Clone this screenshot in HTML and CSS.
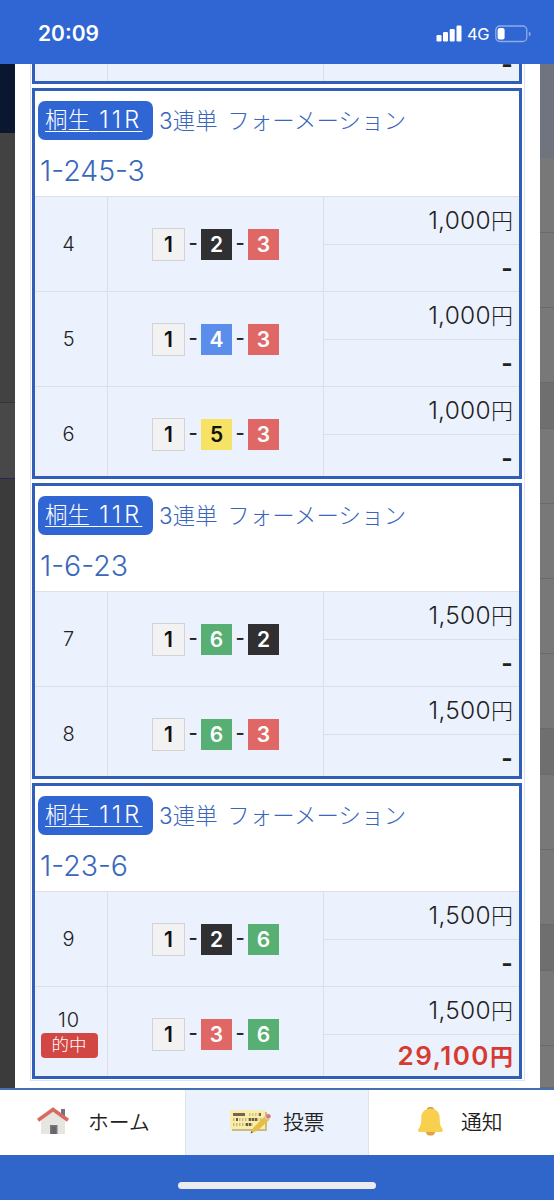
FILE: index.html
```html
<!DOCTYPE html>
<html lang="ja">
<head>
    <meta charset="UTF-8">
    <meta name="viewport" content="width=device-width, initial-scale=1.0">
    <title>投票履歴</title>
    <link rel="stylesheet" href="styles.css">
</head>
<body>
    <header class="status-bar">
        <span class="clock">20:09</span>
        <div class="status-icons">
            <svg class="signal" width="26" height="17" viewBox="0 0 26 17" fill="#fff">
                <rect x="0.5" y="10" width="5" height="6.5" rx="1.2"/>
                <rect x="7" y="7" width="5" height="9.5" rx="1.2"/>
                <rect x="13.7" y="4" width="5" height="12.5" rx="1.2"/>
                <rect x="20.5" y="0.5" width="5" height="16" rx="1.2"/>
            </svg>
            <span class="network">4G</span>
            <svg class="battery" width="36" height="18" viewBox="0 0 36 18">
                <rect x="0.8" y="1" width="31" height="15.5" rx="4" fill="none" stroke="#8eabe5" stroke-width="1.3"/>
                <rect x="2.6" y="3" width="7" height="11.6" rx="2" fill="#fff"/>
                <path d="M33.8 6.5a2.6 2.6 0 0 1 0 5z" fill="#8eabe5"/>
            </svg>
        </div>
    </header>

    <div class="main">
        <div class="backdrop backdrop-left">
            <div class="navy"></div>
            <div class="mid"></div>
            <div class="light"></div>
            <div class="rest"></div>
        </div>

        <div class="sheet">
            <div class="bet-list">
                <section class="bet bet-prev">
                    <div class="row">
                        <div class="no"></div>
                        <div class="combo"></div>
                        <div class="money"><div class="payout">-</div></div>
                    </div>
                </section>

                <section class="bet">
                    <div class="bet-head">
                        <div class="race-line"><a class="race">桐生 <b>11R</b></a><span class="type"><b>3</b>連単 フォーメーション</span></div>
                        <div class="numbers">1-245-3</div>
                    </div>
                    <div class="row">
                        <div class="no">4</div>
                        <div class="combo"><span class="boat b1">1</span><i>-</i><span class="boat b2">2</span><i>-</i><span class="boat b3">3</span></div>
                        <div class="money"><div class="amount">1,000<span>円</span></div><div class="payout">-</div></div>
                    </div>
                    <div class="row">
                        <div class="no">5</div>
                        <div class="combo"><span class="boat b1">1</span><i>-</i><span class="boat b4">4</span><i>-</i><span class="boat b3">3</span></div>
                        <div class="money"><div class="amount">1,000<span>円</span></div><div class="payout">-</div></div>
                    </div>
                    <div class="row">
                        <div class="no">6</div>
                        <div class="combo"><span class="boat b1">1</span><i>-</i><span class="boat b5">5</span><i>-</i><span class="boat b3">3</span></div>
                        <div class="money"><div class="amount">1,000<span>円</span></div><div class="payout">-</div></div>
                    </div>
                </section>

                <section class="bet">
                    <div class="bet-head">
                        <div class="race-line"><a class="race">桐生 <b>11R</b></a><span class="type"><b>3</b>連単 フォーメーション</span></div>
                        <div class="numbers">1-6-23</div>
                    </div>
                    <div class="row">
                        <div class="no">7</div>
                        <div class="combo"><span class="boat b1">1</span><i>-</i><span class="boat b6">6</span><i>-</i><span class="boat b2">2</span></div>
                        <div class="money"><div class="amount">1,500<span>円</span></div><div class="payout">-</div></div>
                    </div>
                    <div class="row">
                        <div class="no">8</div>
                        <div class="combo"><span class="boat b1">1</span><i>-</i><span class="boat b6">6</span><i>-</i><span class="boat b3">3</span></div>
                        <div class="money"><div class="amount">1,500<span>円</span></div><div class="payout">-</div></div>
                    </div>
                </section>

                <section class="bet">
                    <div class="bet-head">
                        <div class="race-line"><a class="race">桐生 <b>11R</b></a><span class="type"><b>3</b>連単 フォーメーション</span></div>
                        <div class="numbers">1-23-6</div>
                    </div>
                    <div class="row">
                        <div class="no">9</div>
                        <div class="combo"><span class="boat b1">1</span><i>-</i><span class="boat b2">2</span><i>-</i><span class="boat b6">6</span></div>
                        <div class="money"><div class="amount">1,500<span>円</span></div><div class="payout">-</div></div>
                    </div>
                    <div class="row">
                        <div class="no no-hit">10<span class="hit">的中</span></div>
                        <div class="combo"><span class="boat b1">1</span><i>-</i><span class="boat b3">3</span><i>-</i><span class="boat b6">6</span></div>
                        <div class="money"><div class="amount">1,500<span>円</span></div><div class="payout win">29,100<span>円</span></div></div>
                    </div>
                </section>
            </div>
        </div>

        <div class="backdrop backdrop-right">
            <div class="top"></div>
            <div></div>
            <div></div>
            <div></div>
            <div class="dark"></div>
            <div></div>
            <div></div>
            <div></div>
            <div></div>
            <div class="dark"></div>
            <div></div>
            <div></div>
            <div class="dark"></div>
            <div></div>
            <div class="end"></div>
        </div>
    </div>

    <nav class="tabs">
        <a class="tab tab-home">
            <svg width="32" height="28" viewBox="0 0 32 28">
                <path d="M24 2h4v10h-4z" fill="#767282"/>
                <path d="M4 13 16 4l12 9v14H4z" fill="#e7e5e0"/>
                <path d="M1 13.2 16 2.5l15 10.7" fill="none" stroke="#d96a60" stroke-width="3.6"/>
                <path d="M13 18h7.5v9H13z" fill="#77767a"/>
                <path d="M14.5 19.5h4.5v7.5h-4.5z" fill="#66656a"/>
            </svg>
            <span>ホーム</span>
        </a>
        <a class="tab tab-vote active">
            <svg width="43" height="28" viewBox="0 0 43 28">
                <path d="M3 5h35v19H3z" fill="#c9bd82"/>
                <path d="M1 3h35v19H1z" fill="#faedab"/>
                <path d="M4 6h12v3H4z" fill="#6e6755"/>
                <path d="M20 7.5h12" stroke="#d0c48d" stroke-width="3" stroke-dasharray="1.5 1.5"/>
                <path d="M30 6h2v3h-2z" fill="#6e6755"/>
                <path d="M4 12.5h29M4 17.5h20" stroke="#c6b981" stroke-width="3" stroke-dasharray="1.5 1.5"/>
                <path d="M7 11h2v3H7zM20 11h2v3h-2zM23 11h2v3h-2zM26 11h2v3h-2zM17 16h2v3h-2zM20 16h2v3h-2z" fill="#665d43"/>
                <path d="m22 26 2.5-5.5 12-11.7 4 4L28 24z" fill="#e8bd46"/>
                <path d="m36 9.2 3 3" stroke="#d3ced8" stroke-width="2.2"/>
                <circle cx="39.4" cy="9.2" r="2.3" fill="#d97974"/>
                <path d="m21.5 26.5 1-2.5 1.5 1.5z" fill="#5d5546"/>
            </svg>
            <span>投票</span>
        </a>
        <a class="tab tab-notice">
            <svg width="27" height="30" viewBox="0 0 27 30">
                <ellipse cx="13.5" cy="4" rx="3.7" ry="3" fill="#c99846"/>
                <ellipse cx="13.5" cy="25.6" rx="4.8" ry="4" fill="#dba34a"/>
                <path d="M13.5 2.5c5.5 0 9.2 3.8 9.2 9.2 0 6 .8 8.8 2.8 11.2 1 1.4.3 3-1.5 3H3c-1.8 0-2.5-1.6-1.5-3 2-2.4 2.8-5.2 2.8-11.2 0-5.4 3.7-9.2 9.2-9.2z" fill="#f8d04d"/>
            </svg>
            <span>通知</span>
        </a>
    </nav>
    <footer class="home-bar"><div class="indicator"></div></footer>
</body>
</html>
```
FILE: styles.css
```css
* {
    box-sizing: border-box;
}

body {
    width: 554px;
    height: 1200px;
    margin: 0;
    overflow: hidden;
    background-color: #fff;
    color: #222;
    font-family: Inter, "Noto Sans CJK JP", sans-serif;
    font-weight: 300;
}

b, i {
    font-weight: inherit;
    font-style: normal;
}

/* Status bar */
.status-bar {
    height: 64px;
    padding: 0 23px 0 38px;
    display: flex;
    justify-content: space-between;
    align-items: center;
    background-color: #3066d3;
    color: #fff;
}

.clock {
    font-size: 21px;
    font-weight: 600;
    line-height: 24px;
    margin-top: 3px;
}

.status-icons {
    display: flex;
    align-items: center;
    margin-top: 3px;
}

.network {
    margin: 1px 6px 0 5px;
    width: 22px;
    font-size: 16.5px;
    font-weight: 400;
    line-height: 20px;
    letter-spacing: -0.4px;
}

/* Main */
.main {
    height: 1024px;
    display: flex;
    overflow: hidden;
}

.sheet {
    width: 525px;
    padding: 0 15px;
    background-color: #fff;
}

.bet-list {
    height: 1017px;
    padding: 0 2px 0 1px;
    border: 1px solid #dce4f3;
    border-top: none;
}

.bet {
    margin-bottom: 4px;
    border: 3px solid #315fb8;
    background-color: #fff;
}

.bet-prev {
    height: 20px;
    border-top: none;
}

.bet-head {
    height: 105px;
    padding: 10px 3px 0;
    color: #3a67bb;
}

.race-line {
    display: flex;
    align-items: center;
}

.race {
    width: 115px;
    height: 39px;
    padding-left: 7px;
    border-radius: 7px;
    background-color: #3066d3;
    color: #fff;
    font-size: 22.5px;
    line-height: 38px;
    white-space: nowrap;
    word-spacing: 3px;
    text-decoration: underline;
    text-decoration-thickness: 1px;
    text-underline-offset: 3px;
}

.race b {
    font-size: 23.5px;
    letter-spacing: 3.2px;
    margin-right: -3px;
}

.type {
    margin: -1px 0 0 6px;
    font-size: 22.4px;
    line-height: 37px;
    white-space: nowrap;
    letter-spacing: 0.15px;
    word-spacing: 3px;
}

.numbers {
    margin-top: 13px;
    padding-left: 2px;
    font-size: 28.5px;
    line-height: 36px;
}

/* Bet rows */
.row {
    height: 95px;
    display: grid;
    grid-template-columns: 72px 216px 196px;
    background-color: #ebf1fd;
    border-top: 1px solid #dedfe5;
}

.row:last-child {
    height: 90px;
}

.bet-prev .row {
    height: 17px;
    border-top: none;
}

.row, .bet-prev {
    overflow: hidden;
}

.no {
    height: 94px;
    display: flex;
    flex-direction: column;
    align-items: center;
    justify-content: center;
    padding-right: 4px;
    font-size: 20px;
    line-height: 26px;
    letter-spacing: 0.8px;
}

.no-hit {
    height: 91px;
}

.hit {
    width: 57px;
    height: 25px;
    border-radius: 4px;
    background-color: #d24743;
    color: #fff;
    font-size: 17.5px;
    line-height: 24px;
    letter-spacing: 0;
    text-align: center;
}

.combo {
    height: 95px;
    display: flex;
    align-items: center;
    justify-content: center;
    border-left: 1px solid #dedfe5;
    font-size: 20px;
}

.combo i {
    width: 16px;
    font-weight: 500;
    text-align: center;
    margin-top: -4px;
}

.boat {
    width: 31px;
    height: 31px;
    color: #fff;
    font-size: 21px;
    font-weight: 600;
    line-height: 32px;
    text-align: center;
}

.b1 {
    width: 33px;
    height: 33px;
    border: 1px solid #d3d3d6;
    background-color: #f2f2f2;
    color: #111;
}

.b2 { background-color: #303033; }
.b3 { background-color: #df6867; }
.b4 { background-color: #5b8deb; }
.b5 { background-color: #f6e265; color: #111; }
.b6 { background-color: #58af73; }

.money {
    border-left: 1px solid #dedfe5;
    text-align: right;
}

.amount, .payout {
    height: 47px;
    padding-right: 6px;
    font-size: 24.5px;
    line-height: 47px;
    letter-spacing: 0.3px;
    white-space: nowrap;
}

.amount span, .payout span {
    font-size: 22px;
    letter-spacing: 0;
}

.payout {
    border-top: 1px solid #dedfe5;
    font-weight: 700;
}

.bet-prev .payout {
    margin-top: -24px;
}

.win {
    color: #d63a31;
    font-size: 26px;
    font-weight: 600;
    line-height: 42px;
    letter-spacing: 1.5px;
}

.win span {
    font-size: 23px;
}

/* Dimmed page behind the sheet */
.backdrop {
    display: flex;
    flex-direction: column;
}

.backdrop-left {
    width: 15px;
    background-color: #3b3b3b;
}

.navy { height: 69px; background-color: #0b1730; }
.mid { height: 270px; background-color: #424242; border-bottom: 1px solid #353535; }
.light { height: 76px; background-color: #484848; border-bottom: 1px solid #24275a; }

.backdrop-right {
    width: 14px;
    background-color: #747474;
}

.backdrop-right div {
    height: 75px;
    flex-shrink: 0;
    background-color: #787878;
    border-bottom: 1px solid #6a6a6a;
}

.backdrop-right .top { height: 94px; background-color: #70747e; border: none; }
.backdrop-right .dark { height: 46px; background-color: #6f6f6f; }
.backdrop-right .end { height: auto; flex: 1; }

/* Bottom tabs */
.tabs {
    height: 67px;
    display: grid;
    grid-template-columns: 185px 184px 185px;
    border-top: 2px solid #466fae;
}

.tab {
    display: flex;
    align-items: center;
    padding-bottom: 3px;
    background-color: #fff;
    color: #222;
    font-size: 20.8px;
    font-weight: 350;
}

.tab.active {
    background-color: #ebf1fd;
    border-left: 1px solid #e0e3ea;
    border-right: 1px solid #e0e3ea;
}

.tab-home { padding-left: 37px; }
.tab-home span { margin-left: 19px; }
.tab-vote { padding-left: 43px; }
.tab-vote span { margin-left: 11px; }
.tab-notice { padding-left: 48px; }
.tab-notice span { margin-left: 17px; }

.home-bar {
    height: 45px;
    padding-top: 27px;
    background-color: #3066c9;
}

.indicator {
    width: 198px;
    height: 7px;
    margin: 0 auto;
    border-radius: 4px;
    background-color: #ececf0;
}
```
